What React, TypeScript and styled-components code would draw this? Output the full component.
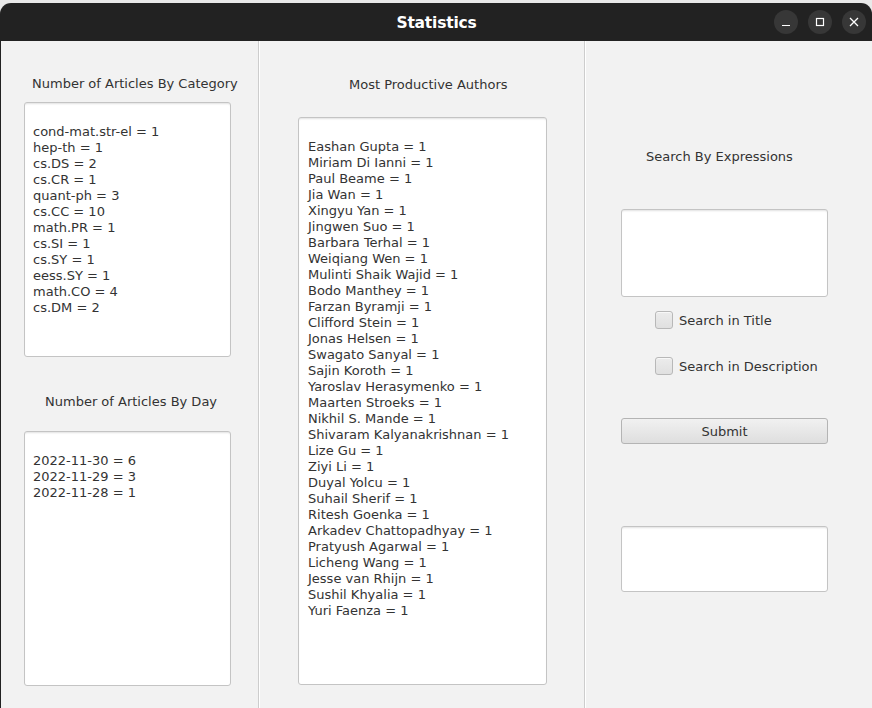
import React from "react";
import styled, { createGlobalStyle } from "styled-components";

const Global = createGlobalStyle`
  html, body { margin: 0; padding: 0; background: #e9e9e9; }
  body { font-family: "DejaVu Sans", "Liberation Sans", sans-serif; }
  * { box-sizing: border-box; }
`;

const Screen = styled.div`
  width: 872px;
  height: 708px;
  padding-top: 3px;
  background: #e9e9e9;
  overflow: hidden;
`;

const Window = styled.div`
  width: 872px;
  height: 705px;
  display: flex;
  flex-direction: column;
  background: #222222;
  border-radius: 11px 11px 0 0;
  overflow: hidden;
  padding-left: 1px;
`;

const TitleBar = styled.div`
  height: 38px;
  flex: none;
  position: relative;
  display: flex;
  align-items: center;
  justify-content: center;
  padding-top: 2px;
`;

const Title = styled.div`
  color: #ffffff;
  font-family: "DejaVu Sans", sans-serif;
  font-weight: bold;
  font-size: 15.5px;
  letter-spacing: -0.2px;
`;

const Controls = styled.div`
  position: absolute;
  right: 6px;
  top: 7px;
  display: flex;
  gap: 10px;
`;

const CtrlButton = styled.div`
  width: 24px;
  height: 24px;
  border-radius: 50%;
  background: #373737;
  display: flex;
  align-items: center;
  justify-content: center;
`;

const Body = styled.div`
  flex: 1;
  display: flex;
  background: #f2f2f2;
  color: #333333;
  font-size: 13px;
`;

const Column = styled.div<{ $w: number; $top: number; $divider?: boolean }>`
  width: ${(p) => p.$w}px;
  flex: none;
  display: flex;
  flex-direction: column;
  align-items: flex-start;
  padding-top: ${(p) => p.$top}px;
  border-right: ${(p) => (p.$divider ? "1px solid #cdcdcd" : "none")};
  box-shadow: ${(p) => (p.$divider ? "1px 0 0 #ffffff" : "none")};
`;

const Caption = styled.div<{ $left: number; $gap: number }>`
  margin-left: ${(p) => p.$left}px;
  margin-bottom: ${(p) => p.$gap}px;
  line-height: 16px;
  font-size: 13px;
  color: #333333;
  white-space: nowrap;
`;

const ListBox = styled.div<{ $left: number; $w: number; $h: number; $after?: number; $before?: number; $pad?: number }>`
  margin-left: ${(p) => p.$left}px;
  margin-top: ${(p) => p.$before ?? 0}px;
  width: ${(p) => p.$w}px;
  height: ${(p) => p.$h}px;
  margin-bottom: ${(p) => p.$after ?? 0}px;
  background: #ffffff;
  border: 1px solid #c4c4c4;
  border-radius: 3px;
  box-shadow: inset 0 2px 2px -1px rgba(0, 0, 0, 0.12);
  padding: 21px 8px 0 ${(p) => p.$pad ?? 8}px;
  font-size: 13px;
  line-height: 16px;
  color: #333333;
  white-space: pre;
  overflow: hidden;
`;

const CheckRow = styled.label<{ $gap: number }>`
  margin-left: 70px;
  margin-top: ${(p) => p.$gap}px;
  display: flex;
  align-items: center;
  gap: 6px;
  height: 18px;
  font-size: 13px;
  color: #333333;
`;

const CheckBox = styled.span`
  width: 18px;
  height: 18px;
  border: 1px solid #b8b8b8;
  border-radius: 3px;
  background: linear-gradient(#ececec, #e0e0e0);
  box-shadow: inset 0 1px 0 #f8f8f8;
`;

const SubmitButton = styled.button`
  margin-left: 36px;
  margin-top: 43px;
  width: 207px;
  height: 26px;
  border: 1px solid #b4b4b4;
  border-radius: 3px;
  background: linear-gradient(#f1f1f1, #dedede);
  font-family: "DejaVu Sans", sans-serif;
  font-size: 13px;
  color: #333333;
  padding: 0;
`;

const categories = [
  "cond-mat.str-el = 1",
  "hep-th = 1",
  "cs.DS = 2",
  "cs.CR = 1",
  "quant-ph = 3",
  "cs.CC = 10",
  "math.PR = 1",
  "cs.SI = 1",
  "cs.SY = 1",
  "eess.SY = 1",
  "math.CO = 4",
  "cs.DM = 2",
];

const days = ["2022-11-30 = 6", "2022-11-29 = 3", "2022-11-28 = 1"];

const authors = [
  "Eashan Gupta = 1",
  "Miriam Di Ianni = 1",
  "Paul Beame = 1",
  "Jia Wan = 1",
  "Xingyu Yan = 1",
  "Jingwen Suo = 1",
  "Barbara Terhal = 1",
  "Weiqiang Wen = 1",
  "Mulinti Shaik Wajid = 1",
  "Bodo Manthey = 1",
  "Farzan Byramji = 1",
  "Clifford Stein = 1",
  "Jonas Helsen = 1",
  "Swagato Sanyal = 1",
  "Sajin Koroth = 1",
  "Yaroslav Herasymenko = 1",
  "Maarten Stroeks = 1",
  "Nikhil S. Mande = 1",
  "Shivaram Kalyanakrishnan = 1",
  "Lize Gu = 1",
  "Ziyi Li = 1",
  "Duyal Yolcu = 1",
  "Suhail Sherif = 1",
  "Ritesh Goenka = 1",
  "Arkadev Chattopadhyay = 1",
  "Pratyush Agarwal = 1",
  "Licheng Wang = 1",
  "Jesse van Rhijn = 1",
  "Sushil Khyalia = 1",
  "Yuri Faenza = 1",
];

export default function App() {
  return (
    <Screen>
      <Global />
      <Window>
        <TitleBar>
          <Title>Statistics</Title>
          <Controls>
            <CtrlButton>
              <svg width="10" height="10" viewBox="0 0 10 10">
                <line x1="1" y1="8.5" x2="9" y2="8.5" stroke="#fff" strokeWidth="1.2" />
              </svg>
            </CtrlButton>
            <CtrlButton>
              <svg width="10" height="10" viewBox="0 0 10 10">
                <rect x="1.5" y="1.5" width="7" height="7" fill="none" stroke="#fff" strokeWidth="1.2" />
              </svg>
            </CtrlButton>
            <CtrlButton>
              <svg width="10" height="10" viewBox="0 0 10 10">
                <path d="M1 1 L9 9 M9 1 L1 9" stroke="#fff" strokeWidth="1.3" />
              </svg>
            </CtrlButton>
          </Controls>
        </TitleBar>
        <Body>
          <Column $w={258} $top={35} $divider>
            <Caption $left={31} $gap={10}>Number of Articles By Category</Caption>
            <ListBox $left={23} $w={207} $h={255} $after={37}>
              {categories.join("\n")}
            </ListBox>
            <Caption $left={44} $gap={21}>Number of Articles By Day</Caption>
            <ListBox $left={23} $w={207} $h={255}>
              {days.join("\n")}
            </ListBox>
          </Column>
          <Column $w={326} $top={36} $divider>
            <Caption $left={90} $gap={24}>Most Productive Authors</Caption>
            <ListBox $left={39} $w={249} $h={568} $pad={9}>
              {authors.join("\n")}
            </ListBox>
          </Column>
          <Column $w={286} $top={108}>
            <Caption $left={61} $gap={44}>Search By Expressions</Caption>
            <ListBox $left={36} $w={207} $h={88} />
            <CheckRow $gap={14}>
              <CheckBox />
              Search in Title
            </CheckRow>
            <CheckRow $gap={28}>
              <CheckBox />
              Search in Description
            </CheckRow>
            <SubmitButton>Submit</SubmitButton>
            <ListBox $left={36} $w={207} $h={66} $before={82} />
          </Column>
        </Body>
      </Window>
    </Screen>
  );
}
